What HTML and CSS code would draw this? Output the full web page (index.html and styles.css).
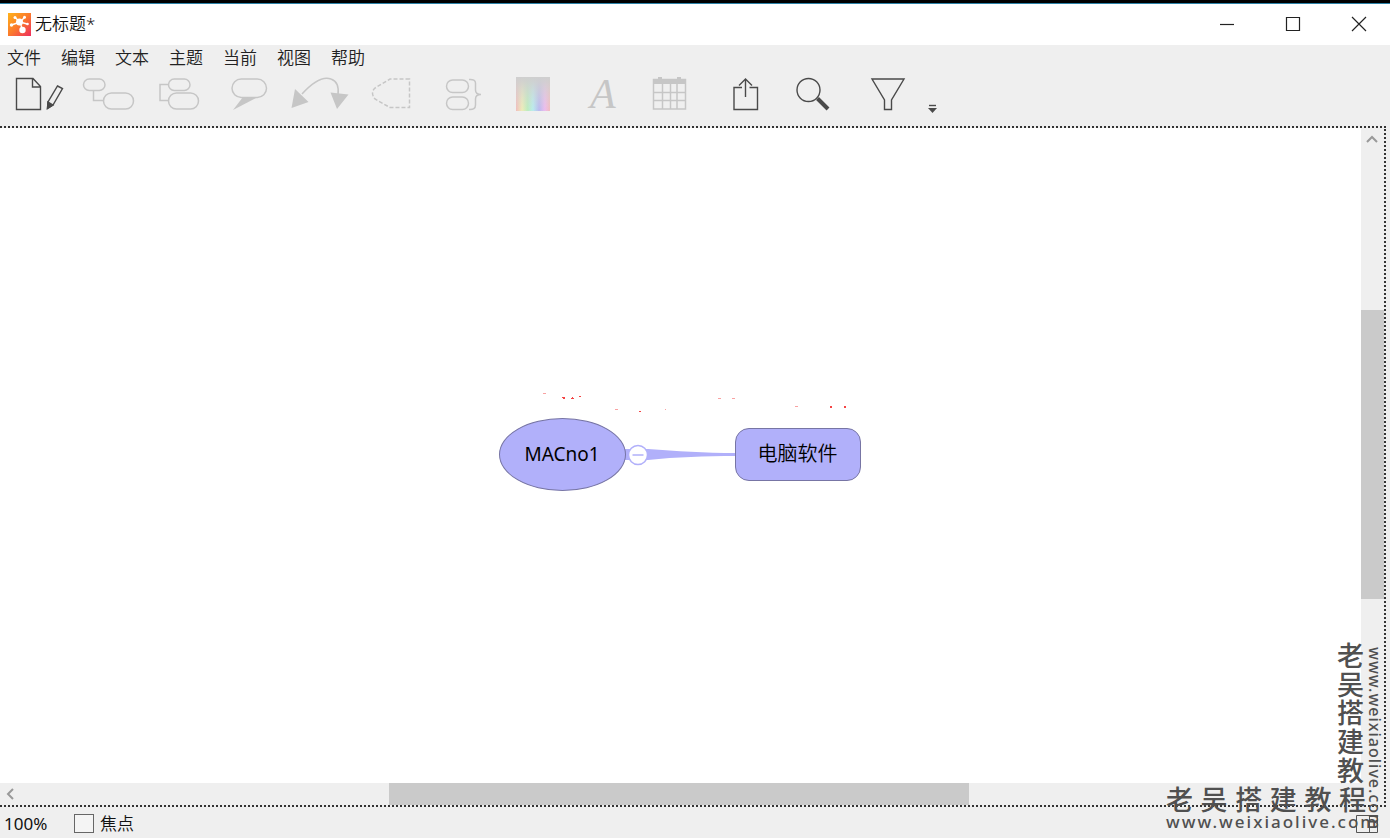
FILE: index.html
```html
<!DOCTYPE html>
<html lang="zh-CN">
<head>
<meta charset="utf-8">
<title>无标题*</title>
<link rel="stylesheet" href="styles.css">
</head>
<body>
<header class="titlebar">
  <svg class="logo" viewBox="0 0 23 23" aria-hidden="true">
    <defs><linearGradient id="lg" x1="0" y1="0" x2="1" y2="1"><stop offset="0" stop-color="#ffb31a"/><stop offset=".5" stop-color="#fb7a2c"/><stop offset="1" stop-color="#ee2d5f"/></linearGradient></defs>
    <rect width="23" height="23" fill="url(#lg)"/>
    <g stroke="#fff" stroke-width="1.4" fill="none"><path d="M12 9L7 4.5M12 9L16.500 4.500M12 9L3.500 12M12 9L19 11M12 9L14.500 17"/></g>
    <g fill="#fff"><circle cx="7" cy="4.500" r="1.500"/><circle cx="16.500" cy="4.300" r="1.500"/><circle cx="3.500" cy="12" r="1.700"/><circle cx="19.500" cy="11" r="1.300"/><circle cx="11.500" cy="9" r="3.500"/><circle cx="14.500" cy="17" r="3.200"/></g>
  </svg>
  <h1 class="title">无标题*</h1>
  <div class="window-buttons">
    <button class="window-button" aria-label="最小化"><svg viewBox="0 0 16 16"><path d="M1 8.500H15"/></svg></button>
    <button class="window-button" aria-label="最大化"><svg viewBox="0 0 16 16"><path d="M1.500 1.500H14.500V14.500H1.500Z"/></svg></button>
    <button class="window-button" aria-label="关闭"><svg viewBox="0 0 16 16"><path d="M1 1L15 15M15 1L1 15"/></svg></button>
  </div>
</header>
<nav class="menubar">
  <button class="menu">文件</button><button class="menu">编辑</button><button class="menu">文本</button><button class="menu">主题</button><button class="menu">当前</button><button class="menu">视图</button><button class="menu">帮助</button>
</nav>
<div class="toolbar">
  <button class="tool" aria-label="新建"><svg viewBox="4 72 70 54"><path d="M16.500 78.500H33L40.500 86.500V109.500H16.500ZM32.500 79V87H40" fill="none"/><path d="M57.500 86L62.500 88.500L53 105L47.500 108.500L48 102Z" fill="none"/><path d="M48 102L53 105L47.500 108.500Z" class="solid"/></svg></button>
  <button class="tool off" aria-label="子主题"><svg viewBox="74 72 70 54"><rect x="83.500" y="79" width="21.500" height="11.500" rx="5.700"/><rect x="103.500" y="93" width="30" height="16" rx="8"/><path d="M93.500 91V100.500H103"/></svg></button>
  <button class="tool off" aria-label="同级主题"><svg viewBox="144 72 70 54"><rect x="168.500" y="79" width="21.500" height="11.500" rx="5.700"/><rect x="168.500" y="93" width="30" height="16" rx="8"/><path d="M168 84.500H160V100.500H168"/></svg></button>
  <button class="tool off" aria-label="标注"><svg viewBox="214 72 70 54"><rect x="232" y="79" width="34.500" height="18.500" rx="9.200"/><path d="M243 97L233 110L256 98Z" class="solid bare"/></svg></button>
  <button class="tool off" aria-label="联系"><svg viewBox="284 72 70 54"><path d="M302 94C312 83 323 76 331 79C337 81 339 87 338 95"/><path d="M291.500 108L295 89L308.500 102ZM330.500 92.500L348.500 94.500L337 109Z" class="solid bare"/></svg></button>
  <button class="tool off" aria-label="边界"><svg viewBox="354 72 70 54"><path stroke-dasharray="4 2" d="M409.500 79H390L375 88Q370 93 375 99L390 107.500H409.500Z"/></svg></button>
  <button class="tool off" aria-label="概要"><svg viewBox="424 72 70 54"><rect x="446.500" y="80" width="22" height="12.500" rx="6.200"/><rect x="446.500" y="97" width="22" height="12.500" rx="6.200"/><path d="M469 79.500Q475.500 79 475.500 83V90Q475.500 94.500 481 94.500Q475.500 94.500 475.500 99V105Q475.500 110 469 109.500"/></svg></button>
  <button class="tool off" aria-label="颜色"><svg viewBox="494 72 70 54"><defs><linearGradient id="hue"><stop offset="0" stop-color="#f2bcbc"/><stop offset=".18" stop-color="#eeedb9"/><stop offset=".34" stop-color="#bdedbd"/><stop offset=".5" stop-color="#b9ecee"/><stop offset=".68" stop-color="#b9baf0"/><stop offset=".85" stop-color="#eebbee"/><stop offset="1" stop-color="#f2bcbc"/></linearGradient><linearGradient id="fade" x2="0" y2="1"><stop offset="0" stop-color="#cfcfcf"/><stop offset=".15" stop-color="#d0d0d0" stop-opacity=".9"/><stop offset="1" stop-color="#d8d8d8" stop-opacity="0"/></linearGradient></defs><path class="bare" fill="url(#hue)" d="M516 77H550V111H516Z"/><path class="bare" fill="url(#fade)" d="M516 77H550V111H516Z"/></svg></button>
  <button class="tool off" aria-label="字体"><svg viewBox="564 72 70 54"><text x="590" y="108" class="letter">A</text></svg></button>
  <button class="tool off" aria-label="表格"><svg viewBox="634 72 70 54"><path d="M653.500 79.500H685.500V109H653.500ZM662.500 84V109M670.500 84V109M677 84V109M653 92.500H685M653 100.500H685"/><path d="M653 79H686V84H653ZM658 77H662V81H658ZM677 77H681V81H677Z" class="solid bare"/></svg></button>
  <button class="tool" aria-label="分享"><svg viewBox="704 72 70 54"><path d="M742 87.500H734V109.500H757.500V87.500H749.500M745.500 97V79M739 85.500L745.500 79L752 85.500"/></svg></button>
  <button class="tool" aria-label="搜索"><svg viewBox="774 72 70 54"><circle cx="808.500" cy="90" r="11.500"/><path d="M817.500 98.500L828 109" stroke-width="4"/></svg></button>
  <button class="tool" aria-label="筛选"><svg viewBox="844 72 70 54"><path d="M872 79H904L891.500 100V109.500H884.500V100Z"/></svg></button>
  <button class="tool more" aria-label="更多"><svg viewBox="914 72 36 54"><path d="M929 105.500H936"/><path d="M928 108H937L932.500 113Z" class="solid bare"/></svg></button>
</div>
<main class="workspace">
  <section class="canvas">
    <div class="map">
      <svg class="links" viewBox="0 0 362 74" aria-hidden="true">
        <path d="M120 31H149C178 33 205 35 237 35V38C205 38 178 39 149 42H120Z" fill="#b1b0fa"/>
        <circle cx="139" cy="37" r="9.500" fill="#fff" stroke="#b1b0fa" stroke-width="1.500"/><path d="M133.500 37H144.500" stroke="#b1b0fa" stroke-width="1.500"/>
        <g fill="#f44545"><path d="M63-21h3v1h-3zM73-21h1v1h-1zM80-22h2v1h-2zM64-20h2v1h-2zM72-20h3v1h-3zM140-7h2v1h-2zM345-12h2v2h-2zM331-12h2v2h-2z"/><path opacity=".5" d="M44-25h3v1h-3zM116-9h3v1h-3zM166-9h1v1h-1zM219-20h3v1h-3zM233-20h3v1h-3zM296-12h3v1h-3z"/></g>
      </svg>
      <div class="node root">MACno1</div>
      <div class="node topic">电脑软件</div>
    </div>
  </section>
  <div class="scroll vertical"><button class="arrow" aria-label="向上"><svg viewBox="0 0 12 12"><path d="M1 9L6 4L11 9"/></svg></button><div class="track"><div class="thumb"></div></div></div>
  <div class="scroll horizontal"><button class="arrow" aria-label="向左"><svg viewBox="0 0 12 12"><path d="M8 1L3 6L8 11"/></svg></button><div class="track"><div class="thumb"></div></div></div>
</main>
<footer class="status">
  <span class="zoom">100%</span>
  <label class="focus"><input type="checkbox" class="check">焦点</label>
  <button class="panel" aria-label="面板"><svg viewBox="0 0 22 18"><path d="M.5.5H21.500V17.500H.5ZM13.500 1V17"/></svg></button>
</footer>
<div class="mark mark-down"><span class="mark-name">老吴搭建教</span></div>
<div class="mark mark-side"><span class="mark-url">www.weixiaolive.com</span></div>
<div class="mark mark-flat"><span class="mark-name">老吴搭建教程</span><span class="mark-url">www.weixiaolive.com</span></div>
</body>
</html>
```
FILE: styles.css
```css
* { box-sizing: border-box; }
body {
  margin: 0;
  height: 100vh;
  display: flex;
  flex-direction: column;
  overflow: hidden;
  position: relative;
  background: #efefef;
  color: #111;
  font: 350 17px/24px "Noto Sans", "Noto Sans CJK SC", sans-serif;
}
button { border: 0; padding: 0; background: none; font: inherit; color: inherit; }
svg { display: block; overflow: visible; }
.titlebar {
  height: 45px;
  display: flex;
  align-items: center;
  gap: 4px;
  padding-left: 8px;
  background: #fff;
  border-top: 3px solid #000;
  box-shadow: inset 0 1px #2c83a8;
}
.logo { width: 23px; height: 23px; }
.title { margin: 0; font-size: 17px; font-weight: 350; }
.window-buttons { margin-left: auto; display: flex; }
.window-button { width: 66px; height: 41px; display: grid; place-items: center; }
.window-button:last-child { width: 62px; margin-left: 2px; }
.window-button svg { width: 16px; height: 16px; fill: none; stroke: #222; stroke-width: 1.2; }
.menubar { height: 27px; display: flex; gap: 20px; padding-left: 7px; color: #222; }
.menu { height: 26px; }
.toolbar { height: 54px; display: flex; padding-left: 4px; }
.tool { width: 70px; height: 54px; }
.tool svg { width: 100%; height: 100%; fill: none; stroke: #4a4a4a; stroke-width: 1.4; }
.tool .solid { fill: #4a4a4a; }
.off svg { stroke: #c6c6c6; stroke-width: 1.5; }
.off .solid { fill: #c6c6c6; }
.tool .bare { stroke: none; }
.tool .letter { font: italic 42px "Liberation Serif", serif; fill: #c6c6c6; stroke: none; }
.tool.more { width: 36px; }
.workspace {
  flex: 1;
  min-height: 0;
  margin-right: 4px;
  display: grid;
  grid-template: minmax(0, 1fr) 22px / minmax(0, 1fr) 23px;
  border: 2px dotted #333;
  border-left: 0;
}
.canvas { background: #fff; display: grid; place-items: center; padding: 0 2px 2px 0; }
.map { position: relative; width: 362px; height: 74px; }
.links { width: 100%; height: 100%; }
.node {
  position: absolute;
  display: grid;
  place-items: center;
  background: #b1b0fa;
  border: 1px solid #7775a4;
  color: #000;
  font-size: 20px;
}
.root { left: 0; top: 0; width: 127px; height: 73px; border-radius: 50%; font-size: 19px; font-weight: 400; }
.topic { left: 236px; top: 10px; width: 126px; height: 53px; border-radius: 14px; }
.scroll { display: flex; }
.vertical { flex-direction: column; }
.horizontal { grid-column: 1 / -1; }
.arrow { width: 22px; height: 22px; display: grid; place-items: center; }
.arrow svg { width: 12px; height: 12px; fill: none; stroke: #999; stroke-width: 2; }
.track { flex: 1; display: flex; }
.vertical .track { flex-direction: column; }
.thumb { background: #cacaca; }
.vertical .thumb { height: 289px; margin-top: 160px; }
.horizontal .thumb { width: 580px; margin-left: 367px; }
.status { height: 31px; display: flex; align-items: center; padding: 2px 12px 0 4px; }
.zoom { width: 70px; font-size: 17px; font-weight: 400; }
.focus { display: flex; align-items: center; gap: 6px; }
.check { appearance: none; width: 20px; height: 19px; margin: 0; border: 1px solid #666; background: #f4f4f4; }
.panel { margin-left: auto; width: 22px; height: 18px; }
.panel svg { fill: none; stroke: #555; }
.mark { position: absolute; color: #505050; font-weight: 500; pointer-events: none; }
.mark-name { display: block; font: 500 27px/28px "Noto Sans CJK SC", sans-serif; text-align-last: justify; }
.mark-url { display: block; font-size: 16px; line-height: 16px; }
.mark-down { right: 26px; bottom: 54px; writing-mode: vertical-rl; }
.mark-down .mark-name { height: 142px; }
.mark-side { right: 7px; bottom: 8px; writing-mode: vertical-rl; }
.mark-side .mark-url { letter-spacing: 1px; }
.mark-flat { right: 10px; bottom: 8px; width: 214px; display: grid; gap: 1px; }
.mark-flat .mark-name { width: 200px; }
.mark-flat .mark-url { font-size: 17px; letter-spacing: 2px; }
```
